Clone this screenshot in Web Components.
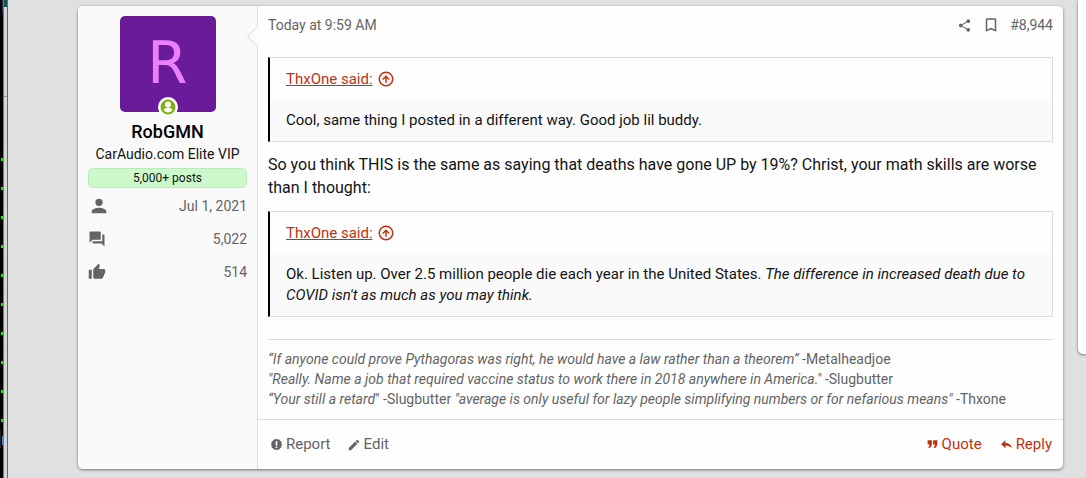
<!DOCTYPE html>
<html lang="en">
<head>
<meta charset="utf-8">
<title>Forum thread</title>
<style>
  html, body { height: 100%; }
  body { margin: 0; background: #e0e0e0; color: #141414; font-family: Roboto, "Liberation Sans", sans-serif; overflow: hidden; }
</style>
</head>
<body>
<thread-page>
  <window-edge slot="edge"></window-edge>
  <forum-post>
    <user-card slot="user" name="RobGMN" rank="CarAudio.com Elite VIP" badge="5,000+ posts" joined="Jul 1, 2021" messages="5,022" likes="514"></user-card>
    <quote-block author="ThxOne">Cool, same thing I posted in a different way. Good job lil buddy.</quote-block>
    <post-text>So you think THIS is the same as saying that deaths have gone UP by 19%? Christ, your math skills are worse than I thought:</post-text>
    <quote-block author="ThxOne">Ok. Listen up. Over 2.5 million people die each year in the United States. <i>The difference in increased death due to</i> <i>COVID isn't as much as you may think.</i></quote-block>
    <post-signature><i>“If anyone could prove Pythagoras was right, he would have a law rather than a theorem”</i> -Metalheadjoe<br><i>"Really. Name a job that required vaccine status to work there in 2018 anywhere in America."</i> -Slugbutter<br><i>“Your still a retard</i>" -Slugbutter <i>"average is only useful for lazy people simplifying numbers or for nefarious means"</i> -Thxone</post-signature>
  </forum-post>
  <side-panel slot="aside"></side-panel>
</thread-page>

<script>
const ICONS = {
  person: 'M12 4a4 4 0 1 0 0 8 4 4 0 0 0 0-8zm0 10c-2.67 0-8 1.34-8 4v2h16v-2c0-2.66-5.33-4-8-4z',
  forum: 'M21 6h-2v9H6v2c0 .55.45 1 1 1h11l4 4V7c0-.55-.45-1-1-1zm-4 6V3c0-.55-.45-1-1-1H3c-.55 0-1 .45-1 1v14l4-4h10c.55 0 1-.45 1-1z',
  thumb: 'M1 21h4V9H1v12zm22-11c0-1.100-.9-2-2-2h-6.310l.95-4.570.03-.32c0-.41-.17-.79-.44-1.060L14.170 1 7.590 7.590C7.220 7.950 7 8.450 7 9v10c0 1.100.9 2 2 2h9c.83 0 1.540-.5 1.840-1.220l3.020-7.050c.09-.23.14-.47.14-.73v-2z',
  share: 'M18 16.080c-.76 0-1.440.3-1.960.77L8.910 12.700c.05-.23.09-.46.09-.7s-.04-.47-.09-.7l7.050-4.110c.54.5 1.250.81 2.040.81a3 3 0 1 0-3-3c0 .24.04.47.09.7L8.040 9.810A3 3 0 1 0 6 15c.79 0 1.500-.31 2.040-.81l7.120 4.160c-.05.21-.08.43-.08.65a2.920 2.920 0 1 0 2.920-2.920z',
  bookmark: 'M17 3H7c-1.100 0-2 .9-2 2v16l7-3 7 3V5c0-1.100-.9-2-2-2zm0 15-5-2.180L7 18V5h10v13z',
  up: 'M12 2a10 10 0 1 0 0 20 10 10 0 0 0 0-20zm0 2a8 8 0 1 1 0 16 8 8 0 0 1 0-16zm-1 13h2V10.800l2.600 2.600L17 12l-5-5-5 5 1.400 1.400 2.600-2.600V17z',
  report: 'M12 1.500l2.500 1.200 2.700.1 1.400 2.300 2.300 1.500.1 2.700 1.200 2.700-1.200 2.700-.1 2.700-2.300 1.500-1.400 2.300-2.700.1L12 22.500l-2.500-1.200-2.700-.1-1.400-2.300-2.300-1.500-.1-2.700L1.800 12 3 9.300l.1-2.700 2.300-1.500 1.400-2.300 2.700-.1L12 1.500zM10.500 6v8h3V6h-3zm0 9.800v2.700h3v-2.700h-3z',
  edit: 'M3 17.250V21h3.750L17.810 9.940l-3.750-3.750L3 17.250zM20.710 7.040a1 1 0 0 0 0-1.410l-2.340-2.340a1 1 0 0 0-1.410 0l-1.830 1.830 3.750 3.750 1.830-1.830z',
  quote: 'M3 4h8v8l-3 6H4l3-6H3V4zm10 0h8v8l-3 6h-4l3-6h-4V4z',
  reply: 'M10 9V4l-8 7.500L10 19v-5.100c5 0 8.500 1.600 12 5.100-1-5-4-10-12-10z',
  online: 'M12 2a10 10 0 1 0 0 20 10 10 0 0 0 0-20zm0 2.600a4 4 0 1 1 0 8 4 4 0 0 1 0-8zm0 14.700a7 7 0 0 1-6-3.200c0-2 4-3 6-3s6 1 6 3a7 7 0 0 1-6 3.200z'
};
const icon = (name, size) => `<svg class="icon" aria-hidden="true" width="${size}" height="${size}" viewBox="0 0 24 24" fill="currentColor"><path fill-rule="evenodd" d="${ICONS[name]}"/></svg>`;

class Base extends HTMLElement {
  connectedCallback() {
    if (this.shadowRoot) return;
    this.attachShadow({ mode: 'open' }).innerHTML =
      `<style>:host{display:block;box-sizing:border-box} *{box-sizing:border-box} .icon{display:block;flex:none} a{color:inherit;text-decoration:none}</style>` + this.view();
  }
  at(name) { return this.getAttribute(name) || ''; }
}

customElements.define('thread-page', class extends Base {
  view() { return `<style>
    :host { display: flex; align-items: flex-start; min-height: 100vh; }
    .edge { flex: none; width: 8px; align-self: stretch; display: flex; }
    main { flex: 1; min-width: 0; padding: 6px 15px 9px 70px; }
    aside { flex: none; width: 8px; }
  </style><div class="edge"><slot name="edge"></slot></div><main><slot></slot></main><aside><slot name="aside"></slot></aside>`; }
});

customElements.define('window-edge', class extends Base {
  view() { return `<style>
    :host { width: 8px; display: flex; }
    .term { width: 3px; background: linear-gradient(#2d2755, #2d2755) 2px 0 / 1px 13px no-repeat,
      linear-gradient(#3096e8, #3096e8) 2px 436px / 1px 9px no-repeat,
      linear-gradient(#301c18, #301c18) 0 430px / 1px 18px no-repeat,
      repeating-linear-gradient(#0f0 0 3px, #000 3px 29px) 1px 158px / 2px 267px no-repeat, #000; }
    .frame { width: 5px; border-left: 1px solid #777; border-right: 1px solid #686868;
      background: linear-gradient(#1a5448, #1a5448) 0 0 / 3px 7px no-repeat,
      linear-gradient(#93a09c, #93a09c) 0 96px / 3px 1px no-repeat, #d5d5d5; }
  </style><div class="term"></div><div class="frame"></div>`; }
});

customElements.define('side-panel', class extends Base {
  view() { return `<style>
    :host { height: 354px; background: #fefefe; border-radius: 0 0 0 5px; box-shadow: 0 1px 3px rgba(0,0,0,.5); }
  </style>`; }
});

customElements.define('user-card', class extends Base {
  view() { return `<style>
    :host { padding: 10px; text-align: center; }
    .avatar { position: relative; width: 96px; height: 96px; margin: 0 auto; border-radius: 5px; background: #6a1b9a; color: #ea80fc; font: 58px/94px "DejaVu Sans", sans-serif; }
    .online { position: absolute; left: 38px; bottom: -5px; width: 20px; height: 20px; border-radius: 50%; background: #fff; color: #7cb311; display: grid; place-items: center; }
    .name { display: block; margin-top: 9px; font-size: 18px; line-height: 22px; font-weight: 500; color: #000; }
    .rank { font-size: 14px; line-height: 20px; margin-top: 1px; }
    .badge { margin-top: 4px; height: 20px; border: 1px solid #b9ebb9; border-radius: 5px; background: #ccf9cc; font-size: 12px; line-height: 18px; }
    dl { margin: 8px 0 0; font-size: 14px; line-height: 20px; color: #646464; display: grid; gap: 13px; }
    dl div { display: flex; align-items: center; justify-content: space-between; height: 20px; }
    dt { width: 20px; display: grid; justify-items: center; }
    dd { margin: 0; }
    .small { justify-items: start; }
  </style>
  <div class="avatar">${this.at('name')[0]}<span class="online">${icon('online', 18)}</span></div>
  <a class="name" href="#user">${this.at('name')}</a>
  <div class="rank">${this.at('rank')}</div>
  <div class="badge">${this.at('badge')}</div>
  <dl>
    <div><dt aria-label="Joined">${icon('person', 22)}</dt><dd>${this.at('joined')}</dd></div>
    <div><dt class="small" aria-label="Messages">${icon('forum', 18)}</dt><dd>${this.at('messages')}</dd></div>
    <div><dt class="small" aria-label="Reaction score">${icon('thumb', 18)}</dt><dd>${this.at('likes')}</dd></div>
  </dl>`; }
});

customElements.define('quote-block', class extends Base {
  view() { return `<style>
    :host { border: 1px solid #dcdcdc; border-left: 2px solid #000; font-size: 15px; }
    header { padding: 10px 16px; line-height: 22px; color: #c0320f; }
    a { display: inline-flex; align-items: center; gap: 4px; }
    span { text-decoration: underline; }
    .body { padding: 10px 16px; line-height: 21px; background: #fafafa; }
  </style>
  <header><a href="#source"><span>${this.at('author')} said:</span>${icon('up', 18)}</a></header>
  <div class="body"><slot></slot></div>`; }
});

customElements.define('post-text', class extends Base {
  view() { return `<style>:host { margin: 11px 0 12px; font-size: 16px; line-height: 23px; }</style><slot></slot>`; }
});

customElements.define('post-signature', class extends Base {
  view() { return `<style>:host { margin-top: 22px; padding: 9px 0 10px; border-top: 1px solid #dcdcdc; font-size: 14px; line-height: 20px; color: #646464; }</style><slot></slot>`; }
});

customElements.define('forum-post', class extends Base {
  view() { return `<style>
    :host { display: flex; background: #fefefe; border-radius: 5px; box-shadow: 0 1px 3px rgba(0,0,0,.5); }
    .user { flex: none; width: 180px; background: #fafafa; border-right: 1px solid #dcdcdc; border-radius: 5px 0 0 5px; position: relative; }
    .user::after { content: ""; position: absolute; right: -8px; top: 23px; width: 14px; height: 14px; background: #fefefe; border: 1px solid #dcdcdc; border-width: 0 0 1px 1px; transform: rotate(45deg); }
    article { flex: 1; min-width: 0; }
    .head, .tools, footer, footer div { display: flex; align-items: center; }
    .head { justify-content: space-between; padding: 9px 10px 0; margin-bottom: 22px; font-size: 14px; line-height: 20px; color: #646464; }
    .tools { gap: 10px; }
    .content { padding: 0 10px; }
    footer { justify-content: space-between; border-top: 1px solid #dcdcdc; padding: 13px 11px 13px 12px; line-height: 23px; font-size: 15px; color: #646464; }
    footer div { gap: 16px; }
    footer .red { gap: 18px; color: #c0320f; }
    footer a { display: flex; align-items: center; gap: 3px; }
  </style>
  <div class="user"><slot name="user"></slot></div>
  <article>
    <div class="head"><a href="#time">Today at 9:59 AM</a>
      <div class="tools"><a href="#share" aria-label="Share">${icon('share', 15)}</a><a href="#save" aria-label="Bookmark">${icon('bookmark', 18)}</a><a href="#post">#8,944</a></div></div>
    <div class="content"><slot></slot></div>
    <footer><div><a href="#report">${icon('report', 13)}Report</a><a href="#edit">${icon('edit', 14)}Edit</a></div>
      <div class="red"><a href="#quote">${icon('quote', 13)}Quote</a><a href="#reply">${icon('reply', 13)}Reply</a></div></footer>
  </article>`; }
});
</script>
</body>
</html>
